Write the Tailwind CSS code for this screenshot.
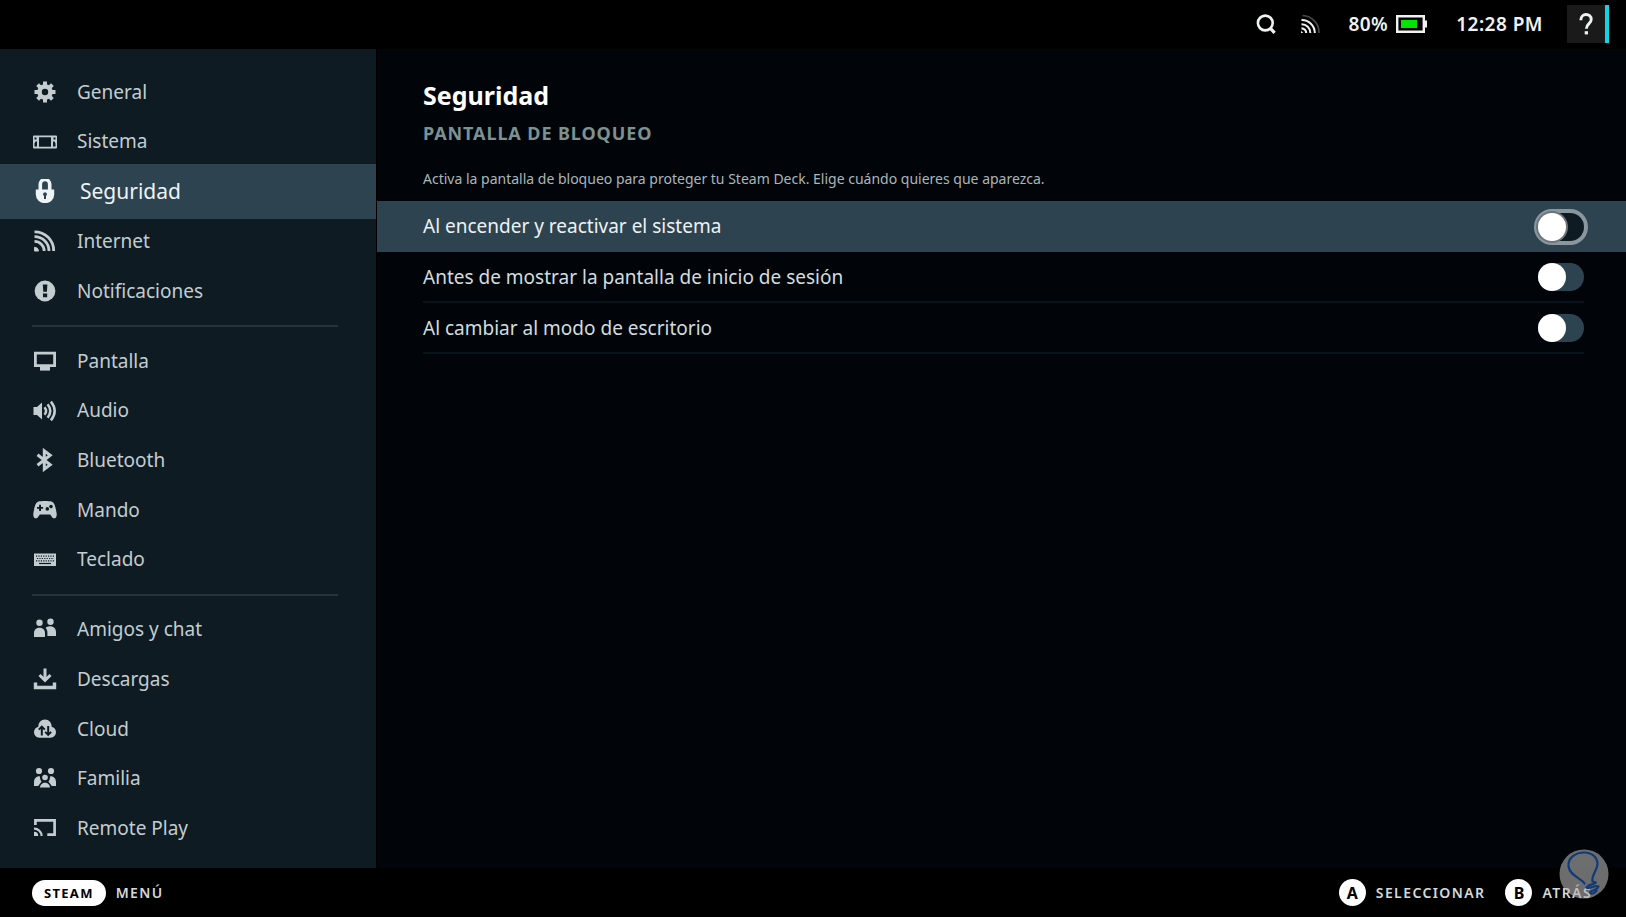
<!DOCTYPE html>
<html lang="es">
<head>
    <meta charset="UTF-8">
    <meta name="viewport" content="width=device-width, initial-scale=1.0">
    <title>Seguridad</title>
    <script src="https://cdn.jsdelivr.net/npm/@tailwindcss/browser@4"></script>
</head>
<body class="flex min-h-screen flex-col bg-black font-['Noto_Sans',sans-serif] text-[#c3cdd0]">

<header class="flex h-[49px] shrink-0 items-center justify-end bg-black pr-[17px] pb-px text-[19px] font-semibold tracking-wide text-[#f0f2f2]">
    <button type="button" aria-label="Buscar" class="mr-6">
        <svg class="size-5" viewBox="0 0 20 20" fill="none" stroke="currentColor" stroke-width="2.6">
            <circle cx="9.3" cy="9" r="7.4"/>
            <path d="M14.2 14.2 18.6 18.8" stroke-width="3.2"/>
        </svg>
    </button>
    <svg class="mr-7 size-5" viewBox="0 0 20 20" fill="none" stroke="currentColor" stroke-width="2">
        <path d="M2.5 1.5A17 17 0 0 1 19 19" stroke="#4a4a4a" stroke-width="1.6"/>
        <path d="M1.5 6A13 13 0 0 1 14.8 19"/>
        <path d="M1.5 10.3A8.7 8.7 0 0 1 10.4 19"/>
        <path d="M1.5 14.3A4.7 4.7 0 0 1 6.2 19" stroke-width="2.2"/>
        <path d="M1 19v-2.3L3.3 19z" fill="currentColor" stroke="none"/>
    </svg>
    <span class="mr-2">80%</span>
    <svg class="mr-7 h-[18px] w-8" viewBox="0 0 32 18">
        <path d="M1.2 1.2h26.6v15.6H1.2z" fill="none" stroke="currentColor" stroke-width="2.4"/>
        <path d="M28.5 5.5H31v7h-2.5z" fill="currentColor"/>
        <path d="M5 5h16v8H5z" fill="#00e600"/>
    </svg>
    <time class="mr-6">12:28 PM</time>
    <button type="button" aria-label="Ayuda" class="flex h-[38px] w-[42px] items-center justify-center border-r-4 border-[#10d5e8] bg-[#1a1a1a]">
        <svg class="h-6 w-4" viewBox="0 0 16 24" fill="none" stroke="currentColor" stroke-width="2.9">
            <path d="M2.8 8.2C2.8 .6 13.2 .9 13.2 7.4C13.2 11.8 8.4 11.6 8.4 16.8"/>
            <path d="M6.7 19.2h3.3v3.2H6.7z" fill="currentColor" stroke="none"/>
        </svg>
    </button>
</header>

<div class="flex flex-1">
    <nav class="flex w-[376px] shrink-0 flex-col bg-[#0e1b23] pt-[18px] pb-[15px] text-[19px]">
        <a href="#general" class="flex min-h-10 flex-1 items-center gap-5 px-[33px]">
            <svg class="size-6" viewBox="0 0 24 24" fill="none" stroke="currentColor">
                <circle cx="12" cy="12" r="5.5" stroke-width="4.6"/>
                <g stroke-width="4">
                    <path d="M12 1.5v4M12 18.500v4M1.500 12h4M18.500 12h4"/>
                    <path d="M4.600 4.600l2.800 2.800M16.600 16.600l2.800 2.800M4.600 19.400l2.800-2.800M16.600 7.400l2.800-2.800"/>
                </g>
            </svg>
            General
        </a>
        <a href="#sistema" class="flex min-h-10 flex-1 items-center gap-5 px-[33px]">
            <svg class="size-6" viewBox="0 0 24 24" fill="currentColor">
                <path fill-rule="evenodd" d="M1 5.500h22a1 1 0 0 1 1 1v11a1 1 0 0 1-1 1H1a1 1 0 0 1-1-1v-11a1 1 0 0 1 1-1zM6 7.300v9.400h12V7.300z"/>
                <path d="M1.500 7.500h2v2h-2zM2.500 11.500h1.500v5H1.500v-3zM20.500 7.500h2v2h-2zM20 11.500h1.500l1 2v3H20z" fill="#0e1b23"/>
            </svg>
            Sistema
        </a>
        <a href="#seguridad" aria-current="page" class="-my-[2px] flex min-h-11 flex-[1.09] items-center gap-[23px] bg-[#2d4450] px-[33px] text-[21px] text-[#eef3f5]">
            <svg class="size-6" viewBox="0 0 24 24" fill="none">
                <path d="M7.300 13V5.500a4.700 5 0 0 1 9.400 0V13" stroke="currentColor" stroke-width="3.600"/>
                <path d="M2.800 10.500h18.400v5a9.200 8.700 0 0 1-18.400 0z" fill="currentColor"/>
                <path d="M12 13.200a2 2 0 0 1 1 3.700v3.100h-2v-3.100a2 2 0 0 1 1-3.700z" fill="#2d4450"/>
            </svg>
            Seguridad
        </a>
        <a href="#internet" class="flex min-h-10 flex-1 items-center gap-5 px-[33px]">
            <svg class="size-6" viewBox="0 0 24 24" fill="none" stroke="currentColor" stroke-width="2.800">
                <path d="M1.500 2.800A19 19 0 0 1 20.700 22"/>
                <path d="M1.500 7.600A14.400 14.400 0 0 1 16 22"/>
                <path d="M1.500 12.300A9.700 9.700 0 0 1 11.200 22"/>
                <path d="M1.500 22v-3.700A4 4 0 0 1 5.500 22z" fill="currentColor" stroke-width="1"/>
            </svg>
            Internet
        </a>
        <a href="#notificaciones" class="flex min-h-10 flex-1 items-center gap-5 px-[33px]">
            <svg class="size-6" viewBox="0 0 24 24" fill="currentColor">
                <circle cx="12" cy="12" r="10.400"/>
                <path d="M9.800 5.500h4.600l-.5 7.300h-3.600zM10 14.600h4.200v3.700H10z" fill="#0e1b23"/>
            </svg>
            Notificaciones
        </a>
        <hr class="mr-[38px] ml-8 my-[9px] border-t-2 border-[#23343b]">
        <a href="#pantalla" class="flex min-h-10 flex-1 items-center gap-5 px-[33px]">
            <svg class="size-6" viewBox="0 0 24 24" fill="none" stroke="currentColor" stroke-width="2.800">
                <path d="M2.400 4.200h19.200v12.400H2.400z"/>
                <path d="M7 18h10v3.600H7z" fill="currentColor" stroke="none"/>
            </svg>
            Pantalla
        </a>
        <a href="#audio" class="flex min-h-10 flex-1 items-center gap-5 px-[33px]">
            <svg class="size-6" viewBox="0 0 24 24" fill="none" stroke="currentColor" stroke-width="2.500">
                <path d="M0.500 8h3.500l5-4.500v17L4 16H0.500z" fill="currentColor" stroke="none"/>
                <path d="M11.500 8.200Q14.700 12 11.500 15.800"/>
                <path d="M14.600 5.300Q20 12 14.600 18.700"/>
                <path d="M17.900 2.600Q25.500 12 17.900 21.400"/>
            </svg>
            Audio
        </a>
        <a href="#bluetooth" class="flex min-h-10 flex-1 items-center gap-5 px-[33px]">
            <svg class="size-6" viewBox="0 0 24 24" fill="none" stroke="currentColor" stroke-width="3">
                <path d="M4.500 6.800 17.200 16.800 11.300 21.200V2.800L17.200 7.200 4.500 17.200"/>
            </svg>
            Bluetooth
        </a>
        <a href="#mando" class="flex min-h-10 flex-1 items-center gap-5 px-[33px]">
            <svg class="size-6" viewBox="0 0 24 24" fill="currentColor">
                <path d="M5.500 3.600C7.500 2.800 16.500 2.800 18.500 3.600C21.500 4.800 22.300 8 23.600 15C24.300 20 21.500 21.500 19.300 19.500L17.200 16.500H6.800L4.700 19.500C2.500 21.500-.3 20 .4 15C1.700 8 2.500 4.800 5.500 3.600z"/>
                <path d="M6.100 6.800h1.900v2.100h2.100v1.900H8v2.100H6.100v-2.100H4V8.900h2.100z" fill="#0e1b23"/>
                <circle cx="14.300" cy="10.900" r="1.800" fill="#0e1b23"/>
                <circle cx="18" cy="8.600" r="1.800" fill="#0e1b23"/>
            </svg>
            Mando
        </a>
        <a href="#teclado" class="flex min-h-10 flex-1 items-center gap-5 px-[33px]">
            <svg class="size-6" viewBox="0 0 24 24" fill="none">
                <path d="M1 5.500h22v12.500H1z" fill="currentColor"/>
                <g stroke="#0e1b23" stroke-width="1.200">
                    <path d="M3 8.200h18" stroke-dasharray="1.200 1.200"/>
                    <path d="M4 10.500h17" stroke-dasharray="1.200 1.200"/>
                    <path d="M3 12.800h18" stroke-dasharray="1.200 1.200"/>
                    <path d="M6 15.500h12"/>
                </g>
            </svg>
            Teclado
        </a>
        <hr class="mr-[38px] ml-8 my-[9px] border-t-2 border-[#23343b]">
        <a href="#amigos" class="flex min-h-10 flex-1 items-center gap-5 px-[33px]">
            <svg class="size-6" viewBox="0 0 24 24" fill="currentColor">
                <circle cx="6.500" cy="5.700" r="3.200"/>
                <circle cx="17.500" cy="4.800" r="3.200"/>
                <path d="M1 20v-4c0-7 11-7 11 0v4z"/>
                <path d="M13.300 10.300c4-2.500 9.700-.5 9.700 4.700v4h-8.600v-3.500c0-2-.6-3.400-1.800-4.600z"/>
            </svg>
            Amigos y chat
        </a>
        <a href="#descargas" class="flex min-h-10 flex-1 items-center gap-5 px-[33px]">
            <svg class="size-6" viewBox="0 0 24 24" fill="none" stroke="currentColor" stroke-width="3">
                <path d="M12 1.500v11"/>
                <path d="M6.500 8 12 13.300 17.500 8"/>
                <path d="M2.500 15.500v5h19v-5" stroke-width="3.400"/>
            </svg>
            Descargas
        </a>
        <a href="#cloud" class="flex min-h-10 flex-1 items-center gap-5 px-[33px]">
            <svg class="size-6" viewBox="0 0 24 24" fill="none">
                <path d="M5.300 9.700C5.500 5.500 8 2.600 12 2.600s6.500 2.900 6.700 7.100C21 10.300 23 12.300 23 15c0 3.200-2.400 5.700-5.500 5.700h-11C3.400 20.700 1 18.200 1 15c0-2.700 2-4.700 4.300-5.300z" fill="currentColor"/>
                <g stroke="#0e1b23" stroke-width="2">
                    <path d="M8.800 18.500V10M5.800 12.600l3-3 3 3"/>
                    <path d="M15.200 9v8.300M12.200 14.900l3 3 3-3"/>
                </g>
            </svg>
            Cloud
        </a>
        <a href="#familia" class="flex min-h-10 flex-1 items-center gap-5 px-[33px]">
            <svg class="size-6" viewBox="0 0 24 24" fill="currentColor">
                <circle cx="6" cy="5" r="3.100"/>
                <circle cx="18" cy="5" r="3.100"/>
                <circle cx="12" cy="11.500" r="2.800"/>
                <path d="M6.800 10.200c.4 3 .8 4.300 1.800 5.300l-3.400 4.600H1v-4c0-3.500 2.300-6.200 5.800-5.900z"/>
                <path d="M17.200 10.200c-.4 3-.8 4.300-1.800 5.300l3.400 4.600H23v-4c0-3.500-2.300-6.200-5.800-5.900z"/>
                <path d="M7 21.500c.3-6.500 9.700-6.500 10 0z"/>
            </svg>
            Familia
        </a>
        <a href="#remote-play" class="flex min-h-10 flex-1 items-center gap-5 px-[33px]">
            <svg class="size-6" viewBox="0 0 24 24" fill="none" stroke="currentColor" stroke-width="2.700">
                <path d="M2.400 9V4.300h19.200v14.400h-7.300"/>
                <path d="M1 12.600A7.400 7.400 0 0 1 8.600 20" stroke-width="2.200"/>
                <path d="M1 20v-4.300A4.400 4.400 0 0 1 5.300 20z" fill="currentColor" stroke="none"/>
            </svg>
            Remote Play
        </a>
    </nav>

    <main class="ml-px flex-1 bg-[#010509] pt-7">
        <h1 class="px-[46px] text-[25px] leading-9 font-bold text-white">Seguridad</h1>
        <h2 class="mt-1.5 px-[46px] text-lg leading-7 font-bold tracking-wider text-[#7d9191] uppercase">Pantalla de bloqueo</h2>
        <p class="mt-5 mb-2.5 px-[46px] text-sm leading-6 text-[#aab6b8]">Activa la pantalla de bloqueo para proteger tu Steam Deck. Elige cuándo quieres que aparezca.</p>

        <div class="bg-[#2d4450] px-[46px]">
            <label class="-mr-1 flex h-[51px] items-center justify-between text-[19px] text-[#edf2f4]">
                Al encender y reactivar el sistema
                <input type="checkbox" role="switch" class="h-7 w-[46px] appearance-none rounded-full bg-[#0e1b23] ring-4 ring-[#8b979e] outline-none before:block before:size-7 before:rounded-full before:bg-white before:shadow-[0_0_0_2px_#6d747b] checked:before:ml-auto">
            </label>
        </div>
        <div class="px-[46px]">
            <label class="-mr-1 flex h-[51px] items-center justify-between border-b-2 border-[#07141a] pt-px text-[19px] text-[#d3dcde]">
                Antes de mostrar la pantalla de inicio de sesión
                <input type="checkbox" role="switch" class="h-7 w-[46px] appearance-none rounded-full bg-[#2d4450] before:block before:size-7 before:rounded-full before:bg-white checked:before:ml-auto">
            </label>
        </div>
        <div class="px-[46px]">
            <label class="-mr-1 flex h-[51px] items-center justify-between border-b-2 border-[#07141a] pt-px text-[19px] text-[#d3dcde]">
                Al cambiar al modo de escritorio
                <input type="checkbox" role="switch" class="h-7 w-[46px] appearance-none rounded-full bg-[#2d4450] before:block before:size-7 before:rounded-full before:bg-white checked:before:ml-auto">
            </label>
        </div>
    </main>
</div>

<footer class="relative flex h-[49px] shrink-0 items-center justify-between bg-black pr-[34px] pl-8 text-sm font-semibold tracking-widest text-[#d5d8d8]">
    <button type="button" class="flex items-center gap-2.5">
        <span class="rounded-full bg-white px-3 text-[13px] leading-[26px] font-bold tracking-widest text-black">STEAM</span>
        MENÚ
    </button>
    <div class="flex items-center gap-5">
        <button type="button" class="flex items-center gap-2.5">
            <span class="flex size-[27px] items-center justify-center rounded-full bg-white text-base font-bold tracking-normal text-black">A</span>
            SELECCIONAR
        </button>
        <button type="button" class="flex items-center gap-2.5">
            <span class="flex size-[27px] items-center justify-center rounded-full bg-white text-base font-bold tracking-normal text-black">B</span>
            ATRÁS
        </button>
    </div>
    <!-- marca de agua -->
    <svg class="pointer-events-none absolute right-[17px] bottom-[18px] size-[50px]" viewBox="0 0 50 50" fill="none">
        <circle cx="25" cy="25" r="24.500" fill="#b0b0b0" fill-opacity=".62"/>
        <g stroke="#123a78" stroke-width="2.200" stroke-linecap="round" stroke-linejoin="round">
            <path d="M25.500 34.500C22 29 11 27 9.500 17.500C8.500 8.500 17 3.500 25 3.500C34.500 3.500 40 10 38 17.500C36.500 24 32.500 26 33.500 32.500L37 33.500C34 36 29.500 35 27.500 38.500C31 40.500 35.500 35.500 39.500 37.500C38 42 31.500 41 31 43.500C33 46 36 43.500 37.500 42"/>
        </g>
    </svg>
</footer>

</body>
</html>
